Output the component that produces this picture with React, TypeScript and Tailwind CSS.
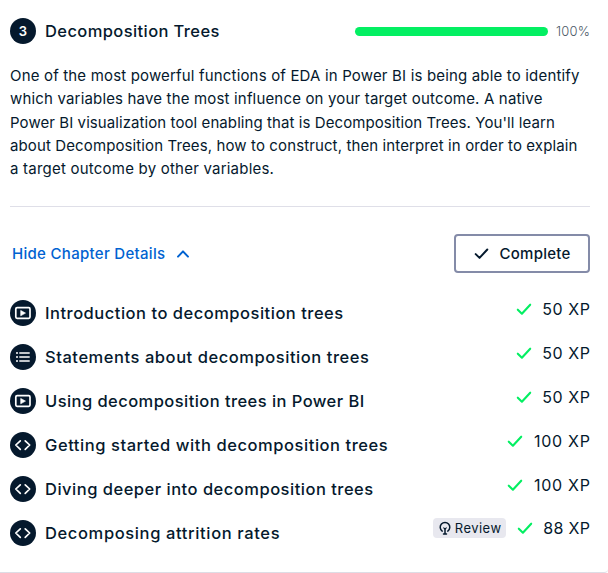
import type { ReactNode } from "react";

type Kind = "video" | "list" | "code";

const paragraph: { text: string; track: string }[] = [
  { text: "One of the most powerful functions of EDA in Power BI is being able to identify", track: "tracking-[0.17px]" },
  { text: "which variables have the most influence on your target outcome. A native", track: "tracking-[0.17px]" },
  { text: "Power BI visualization tool enabling that is Decomposition Trees. You'll learn", track: "tracking-[0.08px]" },
  { text: "about Decomposition Trees, how to construct, then interpret in order to explain", track: "tracking-[0.115px]" },
  { text: "a target outcome by other variables.", track: "tracking-[0.22px]" },
];

const exercises: { kind: Kind; title: string; xp: string; track: string; xpTrack: string; review?: boolean }[] = [
  { kind: "video", title: "Introduction to decomposition trees", xp: "50 XP", track: "tracking-[0.51px]", xpTrack: "tracking-[0.6px] -mr-[0.6px]" },
  { kind: "list", title: "Statements about decomposition trees", xp: "50 XP", track: "tracking-[0.55px]", xpTrack: "tracking-[0.6px] -mr-[0.6px]" },
  { kind: "video", title: "Using decomposition trees in Power BI", xp: "50 XP", track: "tracking-[0.44px]", xpTrack: "tracking-[0.6px] -mr-[0.6px]" },
  { kind: "code", title: "Getting started with decomposition trees", xp: "100 XP", track: "tracking-[0.56px]", xpTrack: "tracking-[0.75px] -mr-[0.75px]" },
  { kind: "code", title: "Diving deeper into decomposition trees", xp: "100 XP", track: "tracking-[0.5px]", xpTrack: "tracking-[0.75px] -mr-[0.75px]" },
  { kind: "code", title: "Decomposing attrition rates", xp: "88 XP", track: "tracking-[0.63px]", xpTrack: "tracking-[0.3px] -mr-[0.3px]", review: true },
];

function Badge({ children }: { children: ReactNode }) {
  return (
    <span className="flex size-[26px] shrink-0 items-center justify-center rounded-full bg-[#05192d] text-white">
      {children}
    </span>
  );
}

function KindIcon({ kind }: { kind: Kind }) {
  if (kind === "video") {
    return (
      <svg width="26" height="26" viewBox="0 0 26 26" fill="none">
        <rect x="5.8" y="7.6" width="14.2" height="10.8" rx="1.3" stroke="currentColor" strokeWidth="1.7" />
        <path d="M10.7 10.4v5.4l4.8-2.7z" fill="currentColor" stroke="currentColor" strokeWidth="0.6" strokeLinejoin="round" />
      </svg>
    );
  }
  if (kind === "list") {
    return (
      <svg width="26" height="26" viewBox="0 0 26 26" fill="none" stroke="currentColor" strokeWidth="1.7">
        <path d="M6 9h2M6 13h2M6 17h2M9.3 9h10.4M9.3 13h10.4M9.3 17h10.4" />
      </svg>
    );
  }
  return (
    <svg width="26" height="26" viewBox="0 0 26 26" fill="none" stroke="currentColor" strokeWidth="1.7" strokeLinecap="round" strokeLinejoin="round">
      <path d="M10.3 8.8 5.8 13l4.5 4.4M15.2 8.8l4.5 4.2-4.5 4.4" />
    </svg>
  );
}

function Check({ size }: { size: number }) {
  return (
    <svg width={size} height={size} viewBox="0 0 16 16" fill="none" stroke="currentColor" strokeWidth="2.1" strokeLinecap="round" strokeLinejoin="round">
      <path d="M1.8 8.7 5.9 12.7 14.2 3.7" />
    </svg>
  );
}

function Bulb() {
  return (
    <svg className="shrink-0" width="12" height="14" viewBox="0 0 12 14" fill="none" stroke="currentColor" strokeWidth="1.5" strokeLinecap="round">
      <path d="M3.2 10.1A4.8 4.8 0 1 1 8.8 10.1M6 8v4.4M4.5 12.9h3" />
      <path d="M4.7 6.9 6 8.1 7.3 6.9" strokeWidth="1.1" />
    </svg>
  );
}

export default function App() {
  return (
    <div className="h-[573px] w-[608px] overflow-hidden rounded-br-[4px] border-b border-[#dddde5] bg-white pl-[10px] pr-[18px] pt-[18px] font-['Inter','Liberation_Sans',sans-serif] text-[#05192d]">
      <header className="flex h-[26px] items-center">
        <Badge>
          <span className="text-[13px] font-semibold leading-none">3</span>
        </Badge>
        <h4 className="ml-[9px] whitespace-nowrap text-[16.5px] font-medium leading-[26px] tracking-[0.4px]">Decomposition Trees</h4>
        <div className="ml-auto h-[9px] w-[193px] shrink-0 rounded-full bg-[#03ef62]" />
        <span className="ml-2 w-[34px] whitespace-nowrap text-[13px] font-light leading-[26px] tracking-[0.2px] text-[#4d5a68]">100%</span>
      </header>

      <p className="mt-[20px] h-[117px] text-[15px] leading-[23.25px]">
        {paragraph.map((line) => (
          <span key={line.text} className={`block whitespace-nowrap ${line.track}`}>
            {line.text}
          </span>
        ))}
      </p>

      <div className="mt-[25px] h-px bg-[#dfdfe8]" />

      <div className="mt-[27px] flex h-[39px] items-center justify-between">
        <a className="ml-[2px] flex items-center text-[#0062d1]">
          <span className="w-[153px] whitespace-nowrap text-[15px] font-medium leading-6 tracking-[0.3px]">Hide Chapter Details</span>
          <svg className="ml-[11px]" width="14" height="10" viewBox="0 0 14 10" fill="none" stroke="currentColor" strokeWidth="2" strokeLinecap="round" strokeLinejoin="round">
            <path d="M2 7.6 7 2.4l5 5.2" />
          </svg>
        </a>
        <button className="flex h-[39px] w-[136px] items-center rounded-[4px] border-2 border-[#848ba8] pl-[18px]">
          <Check size={15} />
          <span className="ml-[10.5px] whitespace-nowrap text-[15px] font-medium leading-6 tracking-[0.25px]">Complete</span>
        </button>
      </div>

      <ul className="mt-[18.4px]">
        {exercises.map((item) => (
          <li key={item.title} className="flex h-[43.9px] items-center">
            <Badge>
              <KindIcon kind={item.kind} />
            </Badge>
            <h5 className={`ml-[9px] whitespace-nowrap text-[16.5px] font-medium leading-6 ${item.track}`}>{item.title}</h5>
            <div className="mb-[8.6px] ml-auto flex items-center">
              {item.review && (
                <span className="mr-[11px] flex h-5 w-[73px] items-center rounded-[4px] bg-[#e8e8ef] pl-[6px]">
                  <Bulb />
                  <span className="ml-1 whitespace-nowrap text-[13px] leading-5 tracking-[0.45px]">Review</span>
                </span>
              )}
              <span className="text-[#03ef62]">
                <Check size={16} />
              </span>
              <span className={`ml-[10.5px] whitespace-nowrap text-[16px] leading-6 ${item.xpTrack}`}>{item.xp}</span>
            </div>
          </li>
        ))}
      </ul>
    </div>
  );
}
